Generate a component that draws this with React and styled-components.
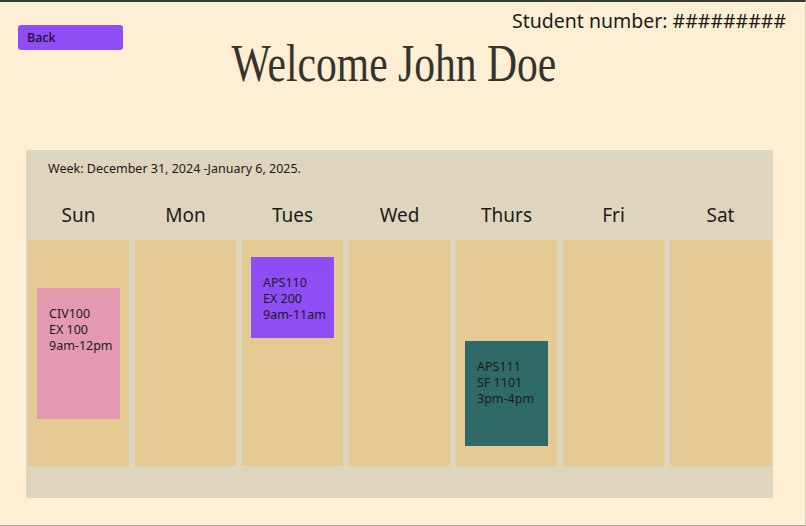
import styled, { createGlobalStyle } from 'styled-components'

const GlobalStyle = createGlobalStyle`
  html, body {
    margin: 0;
    padding: 0;
    background: #fdefd3;
  }
  * {
    box-sizing: border-box;
  }
`

const Page = styled.div`
  width: 806px;
  height: 526px;
  background: #fdefd3;
  border-top: 2px solid #3a3a38;
  border-bottom: 1px solid #a8a6a0;
  border-right: 1px solid #d6cdb8;
  font-family: 'Noto Sans', 'Open Sans', sans-serif;
  color: #1c1b1a;
  overflow: hidden;
`

const Header = styled.header`
  display: grid;
  grid-template-columns: minmax(0, 1fr) auto minmax(0, 1fr);
  align-items: start;
  height: 148px;
`

const BackButton = styled.button`
  justify-self: start;
  margin: 23px 0 0 18px;
  width: 105px;
  height: 25px;
  padding: 0 0 0 9px;
  border: none;
  border-radius: 3px;
  background: #8e4df5;
  color: #1d1033;
  font-family: inherit;
  font-size: 12.5px;
  font-weight: 500;
  text-align: left;
  cursor: pointer;
`

const Title = styled.h1`
  margin: 36px 18px 0 0;
  font-family: 'Liberation Serif', 'DejaVu Serif', serif;
  font-weight: 400;
  font-size: 52px;
  line-height: 1;
  color: #36332f;
  white-space: nowrap;
  transform: scaleX(0.8);
`

const StudentNumber = styled.div`
  justify-self: end;
  margin: 5px 19px 0 0;
  font-size: 19.5px;
  white-space: nowrap;
`

const Calendar = styled.section`
  margin-left: 26px;
  width: 747px;
  height: 348px;
  background: #ddd5bd;
  padding: 0 2px;
  display: flex;
  flex-direction: column;
`

const WeekLabel = styled.div`
  padding: 10px 0 0 20px;
  height: 36px;
  font-size: 12.5px;
`

const DayGrid = styled.div`
  display: grid;
  grid-template-columns: repeat(7, 101px);
  column-gap: 6px;
`

const DayName = styled.div`
  height: 54px;
  display: flex;
  align-items: center;
  justify-content: center;
  padding-top: 4px;
  font-size: 19px;
`

const DayColumn = styled.div`
  position: relative;
  height: 226px;
  background: #e6ca93;
`

const Event = styled.div`
  position: absolute;
  left: 9px;
  top: ${({ $top }) => $top}px;
  width: 83px;
  height: ${({ $height }) => $height}px;
  background: ${({ $color }) => $color};
  padding: 18px 0 0 12px;
  font-size: 12.5px;
  line-height: 16px;
  color: #1e1a1c;
`

const days = ['Sun', 'Mon', 'Tues', 'Wed', 'Thurs', 'Fri', 'Sat']

const events = {
  Sun: { lines: ['CIV100', 'EX 100', '9am-12pm'], top: 48, height: 131, color: '#e39ab1' },
  Tues: { lines: ['APS110', 'EX 200', '9am-11am'], top: 17, height: 81, color: '#8e4df5' },
  Thurs: { lines: ['APS111', 'SF 1101', '3pm-4pm'], top: 101, height: 105, color: '#2e6b67' },
}

const App = () => {
  return (
    <Page>
      <GlobalStyle />
      <Header>
        <BackButton>Back</BackButton>
        <Title>Welcome John Doe</Title>
        <StudentNumber>Student number: #########</StudentNumber>
      </Header>
      <Calendar>
        <WeekLabel>Week: December 31, 2024 -January 6, 2025.</WeekLabel>
        <DayGrid>
          {days.map((day) => (
            <DayName key={day}>{day}</DayName>
          ))}
          {days.map((day) => {
            const ev = events[day]
            return (
              <DayColumn key={day}>
                {ev && (
                  <Event $top={ev.top} $height={ev.height} $color={ev.color}>
                    {ev.lines.map((line) => (
                      <div key={line}>{line}</div>
                    ))}
                  </Event>
                )}
              </DayColumn>
            )
          })}
        </DayGrid>
      </Calendar>
    </Page>
  )
}

export default App
